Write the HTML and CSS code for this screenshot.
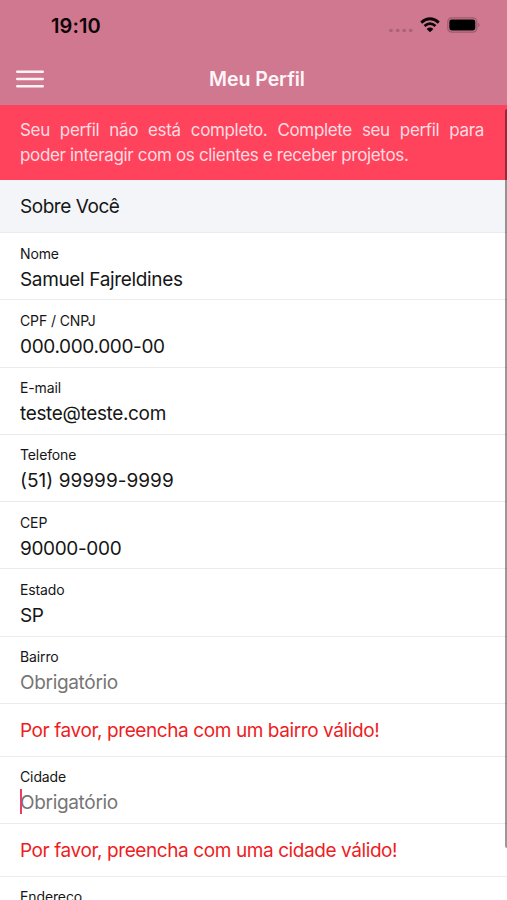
FILE: index.html
```html
<!DOCTYPE html>
<html lang="pt-BR">
<head>
<meta charset="utf-8">
<title>Meu Perfil</title>
<link rel="stylesheet" href="styles.css">
</head>
<body>
<div class="screen">
  <header class="header">
    <div class="status">
      <span class="time">19:10</span>
      <div class="indicators">
        <svg class="dots" width="24" height="5" viewBox="0 0 24 5"><circle cx="2" cy="2.5" r="1.8"/><circle cx="8.7" cy="2.5" r="1.8"/><circle cx="15.2" cy="2.5" r="1.8"/><circle cx="21.7" cy="2.5" r="1.8"/></svg>
        <svg class="wifi" width="20" height="16" viewBox="0 0 20 16"><path d="M1.2 5.6Q10 -2 18.8 5.6M4.5 9Q10 4.3 15.5 9" fill="none" stroke="#0b0507" stroke-width="2.8"/><path d="M6.6 12Q10 9.1 13.4 12L10 15.3Z" fill="#0b0507"/></svg>
        <svg class="battery" width="33" height="16" viewBox="0 0 33 16"><rect x=".8" y=".8" width="29" height="14.4" rx="4" fill="none" stroke="#9c5b6e" stroke-width="1.2"/><rect x="2.3" y="2.6" width="26" height="10.8" rx="2.3" fill="#000"/><path d="M31.2 5.7Q34 8 31.2 10.3Z" fill="#9c5b6e"/></svg>
      </div>
    </div>
    <div class="navbar">
      <svg class="menu" width="28" height="18" viewBox="0 0 28 18"><path d="M1.2 1.8H26.8M1.2 9H26.8M1.2 16.2H26.8" stroke="#fff3f6" stroke-width="2.4" stroke-linecap="round"/></svg>
      <h1 class="title">Meu Perfil</h1>
    </div>
  </header>
  <main class="content">
    <div class="alert"><p class="alert-line">Seu perfil não está completo. Complete seu perfil para</p><p class="alert-end">poder interagir com os clientes e receber projetos.</p></div>
    <h2 class="section">Sobre Você</h2>
    <div class="field"><span class="label">Nome</span><span class="value">Samuel Fajreldines</span></div>
    <div class="field"><span class="label">CPF / CNPJ</span><span class="value">000.000.000-00</span></div>
    <div class="field"><span class="label">E-mail</span><span class="value">teste@teste.com</span></div>
    <div class="field"><span class="label">Telefone</span><span class="value phone">(51) 99999-9999</span></div>
    <div class="field"><span class="label">CEP</span><span class="value">90000-000</span></div>
    <div class="field"><span class="label">Estado</span><span class="value">SP</span></div>
    <div class="field"><span class="label">Bairro</span><span class="value empty">Obrigatório</span></div>
    <p class="error">Por favor, preencha com um bairro válido!</p>
    <div class="field"><span class="label">Cidade</span><span class="value empty focused">Obrigatório</span></div>
    <p class="error">Por favor, preencha com uma cidade válido!</p>
    <div class="field"><span class="label">Endereço</span></div>
    <div class="scrollbar"></div>
  </main>
</div>
</body>
</html>
```
FILE: styles.css
```css
* { box-sizing: border-box; }
body, h1, h2, p { margin: 0; font-weight: 400; }
body { background: #fff; overflow: hidden; font-family: Inter, "Liberation Sans", sans-serif; color: #161616; }
.screen { height: 900px; overflow: hidden; display: flex; flex-direction: column; }
.header { flex: none; height: 105px; background: #cf7890; }
.status { height: 52px; padding: 0 27px 0 51px; display: flex; justify-content: space-between; align-items: center; }
.time { font-size: 20px; font-weight: 600; color: #0d0406; letter-spacing: .1px; }
.indicators { display: flex; align-items: center; margin-top: -2px; }
.dots { fill: #aa6276; margin: 11px 7px 0 0; }
.wifi { margin-right: 7px; }
.battery { display: block; }
.navbar { height: 53px; padding: 0 13px 0 16px; display: grid; grid-template-columns: 28px 1fr 24px; align-items: center; }
.menu { display: block; margin-top: 1px; }
.title { font-size: 19.5px; line-height: 26px; font-weight: 600; color: #fff5f7; text-align: center; letter-spacing: -.05px; }
.content { flex: 1; position: relative; overflow: hidden; }
.alert { height: 75px; padding: 13px 23px 0 20px; background: #ff435d; color: #ffdbe0; font-size: 17px; line-height: 25px; letter-spacing: -.34px; }
.alert-line { text-align-last: justify; white-space: nowrap; }
.alert-end { white-space: nowrap; }
.section { height: 53px; padding-left: 20px; background: #f4f5f9; border-bottom: 1px solid #e9ebef; font-size: 19px; line-height: 53px; letter-spacing: -.45px; }
.field { height: 67.25px; padding: 10.7px 20px 0; border-bottom: 1.4px solid #ececec; }
.label { display: block; font-size: 14px; line-height: 20px; letter-spacing: -.12px; }
.value { display: block; width: max-content; margin-top: 3px; font-size: 19px; line-height: 26px; letter-spacing: -.35px; position: relative; }
.phone { letter-spacing: .03px; }
.empty { color: #757575; letter-spacing: -.32px; }
.focused::before { content: ""; position: absolute; left: 0; top: -1px; width: 2px; height: 25px; background: #e93e60; }
.error { height: 52.9px; padding-left: 20px; border-bottom: 1.4px solid #ececec; color: #ee1d23; font-size: 19px; line-height: 53px; letter-spacing: -.41px; white-space: nowrap; }
.scrollbar { position: absolute; right: 0; top: 4px; width: 2px; height: 739px; background: rgba(0,0,0,.4); border-radius: 2px 0 0 2px; }
```
